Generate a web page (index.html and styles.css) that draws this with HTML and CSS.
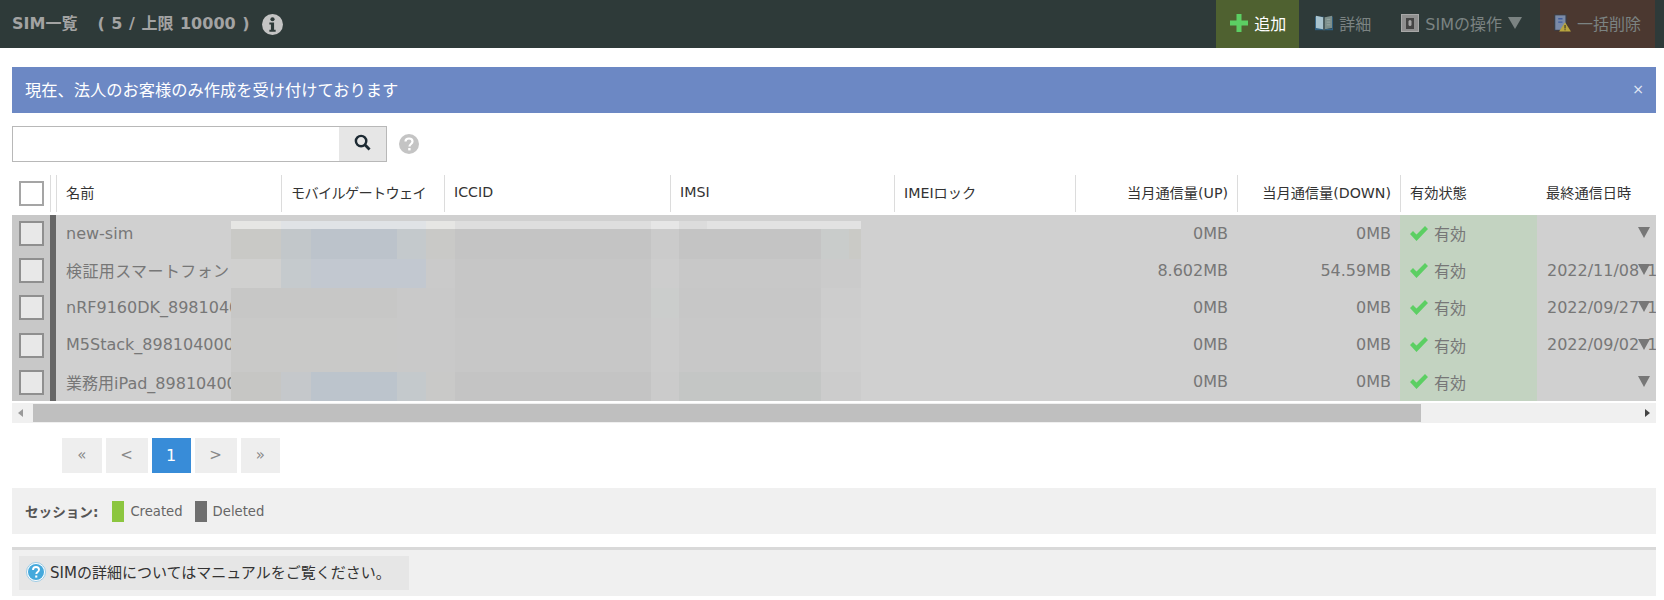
FILE: index.html
```html
<!DOCTYPE html>
<html lang="ja">
<head>
    <meta charset="UTF-8">
    <title>SIM一覧</title>
    <link rel="stylesheet" href="styles.css">
</head>
<body>
    <div class="topbar">
        <div class="title">
            <span>SIM一覧</span>
            <span class="count">( 5 / 上限 10000 )</span>
            <svg class="info-icon" viewBox="0 0 20 20"><circle cx="10" cy="10" r="10" fill="#c4c4c4"/><circle cx="10" cy="5" r="2" fill="#2e3a39"/><path d="M7 8h4.500v7H13v2H7v-2h1.500v-5H7z" fill="#2e3a39"/></svg>
        </div>
        <div class="actions">
            <div class="action add">
                <svg viewBox="0 0 18 18"><path d="M6.500 0h5v6.500H18v5h-6.500V18h-5v-6.500H0v-5h6.500z" fill="#5ccf63"/></svg>
                追加
            </div>
            <div class="action">
                <svg viewBox="0 0 20 18"><path d="M0 2h10v15H0z" fill="#2f5f80"/><path d="M1 1l8 1.500V16l-8-1.500z" fill="#a9c4cf"/><path d="M19 1l-8 1.500V16l8-1.500z" fill="#7d8f8c"/><path d="M10 17h10V2h-1v13l-8 1z" fill="#2f5f80"/><path d="M9 2.500h2V17H9z" fill="#4f5f60"/><path d="M13 5h4M13 8h4M13 11h4" stroke="#9aa9a5"/></svg>
                詳細
            </div>
            <div class="action">
                <svg viewBox="0 0 18 18"><rect x="0.500" y="0.500" width="17" height="17" fill="#8f8f8f" stroke="#a8a8a8"/><rect x="5" y="4" width="8" height="11" fill="#444"/><rect x="7.500" y="6" width="3" height="6" rx="1.500" fill="#a5a5a5"/></svg>
                SIMの操作
                <span class="caret"></span>
            </div>
            <div class="action remove">
                <svg viewBox="0 0 20 20"><rect x="0" y="0" width="15" height="19" fill="#3a3f47"/><rect x="1.500" y="1" width="12" height="17" fill="#7a8aa8"/><path d="M5 5h5M5 9h5" stroke="#3f5c9c" stroke-width="1.500"/><path d="M13 9l7 11H6z" fill="#b9a53e"/><path d="M12.400 12.500h1.200v4h-1.200zM12.400 17.300h1.200v1.200h-1.200z" fill="#2f2b22"/></svg>
                一括削除
            </div>
        </div>
    </div>

    <div class="content">
        <div class="banner">
            <span>現在、法人のお客様のみ作成を受け付けております</span>
            <span class="banner-close">×</span>
        </div>

        <div class="search-row">
            <div class="search">
                <div class="search-input"></div>
                <div class="search-btn">
                    <svg viewBox="0 0 18 18"><circle cx="7.500" cy="7.500" r="5.500" fill="none" stroke="#1d2a33" stroke-width="2.600"/><path d="M11.500 11.500L16.500 16.500" stroke="#1d2a33" stroke-width="3"/></svg>
                </div>
            </div>
            <svg class="help-icon" viewBox="0 0 20 20"><circle cx="10" cy="10" r="10" fill="#c4c4c4"/><path d="M6.500 7.500C6.500 5.500 8 4.500 10 4.500s3.500 1 3.500 3c0 2.500-3 2.500-3 5" fill="none" stroke="#fff" stroke-width="2.200"/><rect x="9.200" y="14" width="2.400" height="2.400" fill="#fff"/></svg>
        </div>

        <div class="table">
            <div class="row head">
                <div class="cell check-cell"><span class="check head-check"></span></div>
                <div class="cell strip-cell"></div>
                <div class="cell sep">名前</div>
                <div class="cell sep kana">モバイルゲートウェイ</div>
                <div class="cell sep">ICCID</div>
                <div class="cell sep">IMSI</div>
                <div class="cell sep">IMEIロック</div>
                <div class="cell sep num">当月通信量(UP)</div>
                <div class="cell sep num">当月通信量(DOWN)</div>
                <div class="cell sep">有効状態</div>
                <div class="cell">最終通信日時</div>
            </div>

            <div class="rows">
                <div class="row item">
                    <div class="cell check-cell"><span class="check"></span></div>
                    <div class="cell strip-cell"><span class="strip"></span></div>
                    <div class="cell">new-sim</div>
                    <div class="cell"></div><div class="cell"></div><div class="cell"></div><div class="cell"></div>
                    <div class="cell num">0MB</div>
                    <div class="cell num">0MB</div>
                    <div class="cell status"><svg viewBox="0 0 18 15"><path d="M0 8l3-3 3.500 3.500L15 0l3 3L6.500 15z" fill="#5ccf63"/></svg>有効</div>
                    <div class="cell"></div>
                    <span class="row-caret"></span>
                </div>
                <div class="row item">
                    <div class="cell check-cell"><span class="check"></span></div>
                    <div class="cell strip-cell"><span class="strip"></span></div>
                    <div class="cell wide-name">検証用スマートフォン</div>
                    <div class="cell"></div><div class="cell"></div><div class="cell"></div><div class="cell"></div>
                    <div class="cell num">8.602MB</div>
                    <div class="cell num">54.59MB</div>
                    <div class="cell status"><svg viewBox="0 0 18 15"><path d="M0 8l3-3 3.500 3.500L15 0l3 3L6.500 15z" fill="#5ccf63"/></svg>有効</div>
                    <div class="cell date">2022/11/08 1</div>
                    <span class="row-caret"></span>
                </div>
                <div class="row item">
                    <div class="cell check-cell"><span class="check"></span></div>
                    <div class="cell strip-cell"><span class="strip"></span></div>
                    <div class="cell">nRF9160DK_89810400</div>
                    <div class="cell"></div><div class="cell"></div><div class="cell"></div><div class="cell"></div>
                    <div class="cell num">0MB</div>
                    <div class="cell num">0MB</div>
                    <div class="cell status"><svg viewBox="0 0 18 15"><path d="M0 8l3-3 3.500 3.500L15 0l3 3L6.500 15z" fill="#5ccf63"/></svg>有効</div>
                    <div class="cell date">2022/09/27 1</div>
                    <span class="row-caret"></span>
                </div>
                <div class="row item">
                    <div class="cell check-cell"><span class="check"></span></div>
                    <div class="cell strip-cell"><span class="strip"></span></div>
                    <div class="cell">M5Stack_89810400000</div>
                    <div class="cell"></div><div class="cell"></div><div class="cell"></div><div class="cell"></div>
                    <div class="cell num">0MB</div>
                    <div class="cell num">0MB</div>
                    <div class="cell status"><svg viewBox="0 0 18 15"><path d="M0 8l3-3 3.500 3.500L15 0l3 3L6.500 15z" fill="#5ccf63"/></svg>有効</div>
                    <div class="cell date">2022/09/02 1</div>
                    <span class="row-caret"></span>
                </div>
                <div class="row item">
                    <div class="cell check-cell"><span class="check"></span></div>
                    <div class="cell strip-cell"><span class="strip"></span></div>
                    <div class="cell">業務用iPad_89810400</div>
                    <div class="cell"></div><div class="cell"></div><div class="cell"></div><div class="cell"></div>
                    <div class="cell num">0MB</div>
                    <div class="cell num">0MB</div>
                    <div class="cell status"><svg viewBox="0 0 18 15"><path d="M0 8l3-3 3.500 3.500L15 0l3 3L6.500 15z" fill="#5ccf63"/></svg>有効</div>
                    <div class="cell"></div>
                    <span class="row-caret"></span>
                </div>

                <!-- blurred-out part of the screenshot -->
                <div class="mosaic">
                    <div class="band band-top"></div>
                    <div class="band band-blue"></div>
                    <div class="band band-blue2"></div>
                    <div class="band band-plain"></div>
                    <div class="band band-plain2"></div>
                    <div class="band band-last"></div>
                </div>
            </div>

            <div class="scrollbar">
                <span class="arrow arrow-left"></span>
                <div class="scroll-track"><div class="scroll-thumb"></div></div>
                <span class="arrow arrow-right"></span>
            </div>
        </div>

        <div class="pager">
            <span class="page small">«</span>
            <span class="page wide">&lt;</span>
            <span class="page active">1</span>
            <span class="page wide">&gt;</span>
            <span class="page small">»</span>
        </div>

        <div class="legend">
            <b>セッション:</b>
            <span class="swatch green"></span>
            <span class="legend-text">Created</span>
            <span class="swatch gray"></span>
            <span class="legend-text">Deleted</span>
        </div>

        <div class="note">
            <div class="note-box">
                <svg viewBox="0 0 20 20"><circle cx="10" cy="10" r="9.500" fill="#fff" stroke="#9ccbe4"/><circle cx="10" cy="10" r="8" fill="#45a9dc"/><path d="M7 8c0-2 1.300-3 3-3s3 1 3 2.800c0 2.200-2.700 2.200-2.700 4.200" fill="none" stroke="#fff" stroke-width="1.900"/><rect x="9.200" y="13.500" width="2.100" height="2.100" fill="#fff"/></svg>
                SIMの詳細についてはマニュアルをご覧ください。
            </div>
        </div>
    </div>
</body>
</html>
```

FILE: styles.css
```css
body {
    margin: 0;
    background: #fff;
    color: #333;
    font-family: "DejaVu Sans", "Noto Sans CJK JP", sans-serif;
    font-size: 15px;
    overflow: hidden;
}

.topbar {
    display: flex;
    justify-content: space-between;
    height: 48px;
    padding-right: 9px;
    background: #2e3a39;
}
.title {
    display: flex;
    align-items: center;
    padding-left: 12px;
    padding-bottom: 4px;
    color: #a3a3a3;
    font-weight: bold;
    font-size: 16px;
}
.count {
    margin-left: 20px;
    word-spacing: 1px;
}
.info-icon {
    width: 21px;
    height: 21px;
    margin-left: 12px;
    margin-top: 4px;
}
.actions {
    display: flex;
}
.action {
    display: flex;
    align-items: center;
    gap: 6px;
    padding: 0 14px 3px 16px;
    color: #7b8382;
    font-size: 16px;
    white-space: nowrap;
}
.action svg {
    width: 18px;
    height: 18px;
}
.add {
    width: 83px;
    box-sizing: border-box;
    padding: 0 0 3px 14px;
    background: #4f6130;
    color: #fff;
}
.remove {
    width: 115px;
    box-sizing: border-box;
    margin-left: 4px;
    padding-left: 14px;
    background: #4b3830;
}
.remove svg {
    width: 20px;
    height: 20px;
}
.caret {
    width: 0;
    height: 0;
    border-left: 7px solid transparent;
    border-right: 7px solid transparent;
    border-top: 12px solid #7b8382;
}

.content {
    padding: 19px 8px 0 12px;
}
.banner {
    display: flex;
    justify-content: space-between;
    align-items: center;
    height: 46px;
    padding: 0 12px 0 13px;
    background: #6c88c4;
    color: #fff;
    font-size: 16.250px;
}
.banner span:first-child {
    margin-bottom: 3px;
}
.banner-close {
    font-size: 14px;
    color: #e4e9f5;
    margin-bottom: 3px;
}

.search-row {
    display: flex;
    align-items: center;
    margin-top: 13px;
    gap: 12px;
}
.search {
    display: flex;
    width: 375px;
    height: 36px;
    box-sizing: border-box;
    border: 1px solid #b8b8b8;
}
.search-input {
    flex: 1;
}
.search-btn {
    display: flex;
    align-items: center;
    justify-content: center;
    width: 47px;
    background: #e6e6e6;
}
.search-btn svg {
    width: 17px;
    height: 17px;
    margin-bottom: 3px;
}
.help-icon {
    width: 20px;
    height: 20px;
}

.table {
    margin-top: 13px;
    overflow: hidden;
}
.row {
    display: grid;
    grid-template-columns: 38px 6px 225px 163px 226px 224px 181px 162px 163px 137px 180px;
    position: relative;
}
.head {
    height: 37px;
    margin-bottom: 3px;
    font-size: 14.200px;
}
.cell {
    display: flex;
    align-items: center;
    min-width: 0;
    padding: 0 9px;
    white-space: nowrap;
    overflow: hidden;
}
.sep {
    border-left: 1px solid #dcdcdc;
}
.head .cell {
    padding-bottom: 4px;
}
.kana {
    letter-spacing: -0.7px;
}
.num {
    justify-content: flex-end;
}
.check-cell {
    padding: 0 0 0 7px;
    border: 0;
}
.strip-cell {
    padding: 0;
    border-left: 1px solid #dcdcdc;
}
.head .check-cell,
.head .strip-cell {
    padding-bottom: 0;
}
.check {
    width: 25px;
    height: 25px;
    box-sizing: border-box;
    border: 2px solid #8f8f8f;
    background: #e8e8e8;
}
.head-check {
    background: #fff;
    border-color: #a5a5a5;
}
.strip {
    display: block;
    width: 6px;
    height: 100%;
    margin-left: -1px;
    background: #666;
}
.item {
    height: 37.200px;
    background: #d0d0d0;
    color: #777;
    font-size: 16px;
}
.item .cell {
    padding: 0 9px 1px 10px;
}
.item .strip-cell {
    padding: 0;
    border: 0;
    align-items: stretch;
}
.item .strip {
    margin-left: 0;
}
.item .check-cell {
    padding: 0 0 0 7px;
    background: #c8c8c8;
}
.wide-name {
    letter-spacing: 0.4px;
}
.date {
    word-spacing: 3px;
}
.status {
    gap: 6px;
    background: #c3d3c1;
}
.status svg {
    width: 18px;
    height: 15px;
}
.row-caret {
    position: absolute;
    top: 12px;
    right: 6px;
    width: 0;
    height: 0;
    border-left: 6px solid transparent;
    border-right: 6px solid transparent;
    border-top: 11px solid #777;
}

.rows {
    position: relative;
}
.mosaic {
    position: absolute;
    top: 6px;
    left: 219px;
    width: 630px;
    height: 180px;
    display: flex;
    flex-direction: column;
}
.band-top {
    height: 8px;
    background: linear-gradient(to right, #e6e6e4 0 50px, #e0e3e6 50px 195px, #e6e6e4 195px 224px, #dedede 224px 420px, #e6e6e6 420px 448px, #dcdcdc 448px 476px, #e2e2e2 476px);
}
.band-blue {
    height: 30px;
    background: linear-gradient(to right, #c9c9c6 0 50px, #c2c7ca 50px 80px, #bcc3cb 80px 166px, #c4c9cc 166px 195px, #c9c9c7 195px 224px, #c4c4c4 224px 420px, #cbcbcb 420px 448px, #c4c4c4 448px 590px, #c9cccb 590px 618px, #cacac6 618px);
}
.band-blue2 {
    height: 29px;
    background: linear-gradient(to right, #d0d0cf 0 50px, #c5cacd 50px 80px, #c2c8d0 80px 195px, #cacaca 195px 224px, #c6c6c6 224px 420px, #cdcdcd 420px 448px, #c8c8c8 448px 590px, #cbcbcb 590px);
}
.band-plain {
    height: 30px;
    background: linear-gradient(to right, #c7c7c6 0 166px, #c9c9c9 166px 224px, #c6c6c6 224px 420px, #cbcdcc 420px 448px, #c7c7c7 448px 590px, #cdcdcd 590px);
}
.band-plain2 {
    height: 54px;
    background: linear-gradient(to right, #c9c9c8 0 166px, #c9c9c9 166px 224px, #c7c7c7 224px 420px, #cccccc 420px 448px, #c8c8c8 448px 590px, #cecece 590px);
}
.band-last {
    height: 29px;
    background: linear-gradient(to right, #c6c6c4 0 50px, #c5c8cb 50px 80px, #bcc4cc 80px 166px, #c4c9cc 166px 195px, #c9c9c8 195px 224px, #c4c4c4 224px 420px, #cbcbcb 420px 448px, #c4c6c5 448px 590px, #cccccc 590px);
}

.scrollbar {
    display: flex;
    align-items: center;
    height: 20px;
    margin-top: 2px;
    background: #f0f0f0;
}
.arrow {
    flex: none;
    width: 0;
    height: 0;
    border-top: 4px solid transparent;
    border-bottom: 4px solid transparent;
}
.arrow-left {
    margin: 0 10px 0 6px;
    border-right: 5px solid #999;
}
.arrow-right {
    margin: 0 6px 0 9px;
    border-left: 5px solid #444;
}
.scroll-track {
    flex: 1;
}
.scroll-thumb {
    width: 1388px;
    height: 18px;
    background: #bfbfbf;
}

.pager {
    display: flex;
    gap: 4px;
    margin-top: 15px;
    padding-left: 50px;
}
.page {
    display: flex;
    align-items: center;
    justify-content: center;
    height: 35px;
    background: #eee;
    color: #888;
    font-size: 15px;
}
.small {
    width: 39.500px;
}
.wide {
    width: 42px;
}
.active {
    width: 39px;
    background: #388cd8;
    color: #fff;
    font-size: 16px;
}

.legend {
    display: flex;
    align-items: center;
    height: 46px;
    margin-top: 15px;
    padding: 1px 0 0 13px;
    box-sizing: border-box;
    background: #f0f0f0;
    font-size: 13.200px;
    color: #666;
}
.legend b {
    color: #555;
    font-size: 13.600px;
    margin-right: 14px;
}
.swatch {
    width: 12px;
    height: 21px;
    margin-right: 6px;
}
.green {
    background: #8cc63f;
}
.gray {
    background: #6f6f6f;
    margin-left: 12px;
}
.note {
    margin-top: 13px;
    padding: 6px 7px 6px;
    height: 34px;
    border-top: 3px solid #d9d9d9;
    background: #f0f0f0;
}
.note-box {
    display: flex;
    align-items: center;
    gap: 4px;
    width: 390px;
    height: 34px;
    box-sizing: border-box;
    padding: 0 0 2px 7px;
    background: #e6e6e6;
    font-size: 15px;
    color: #333;
    white-space: nowrap;
}
.note-box svg {
    width: 20px;
    height: 20px;
}
```
